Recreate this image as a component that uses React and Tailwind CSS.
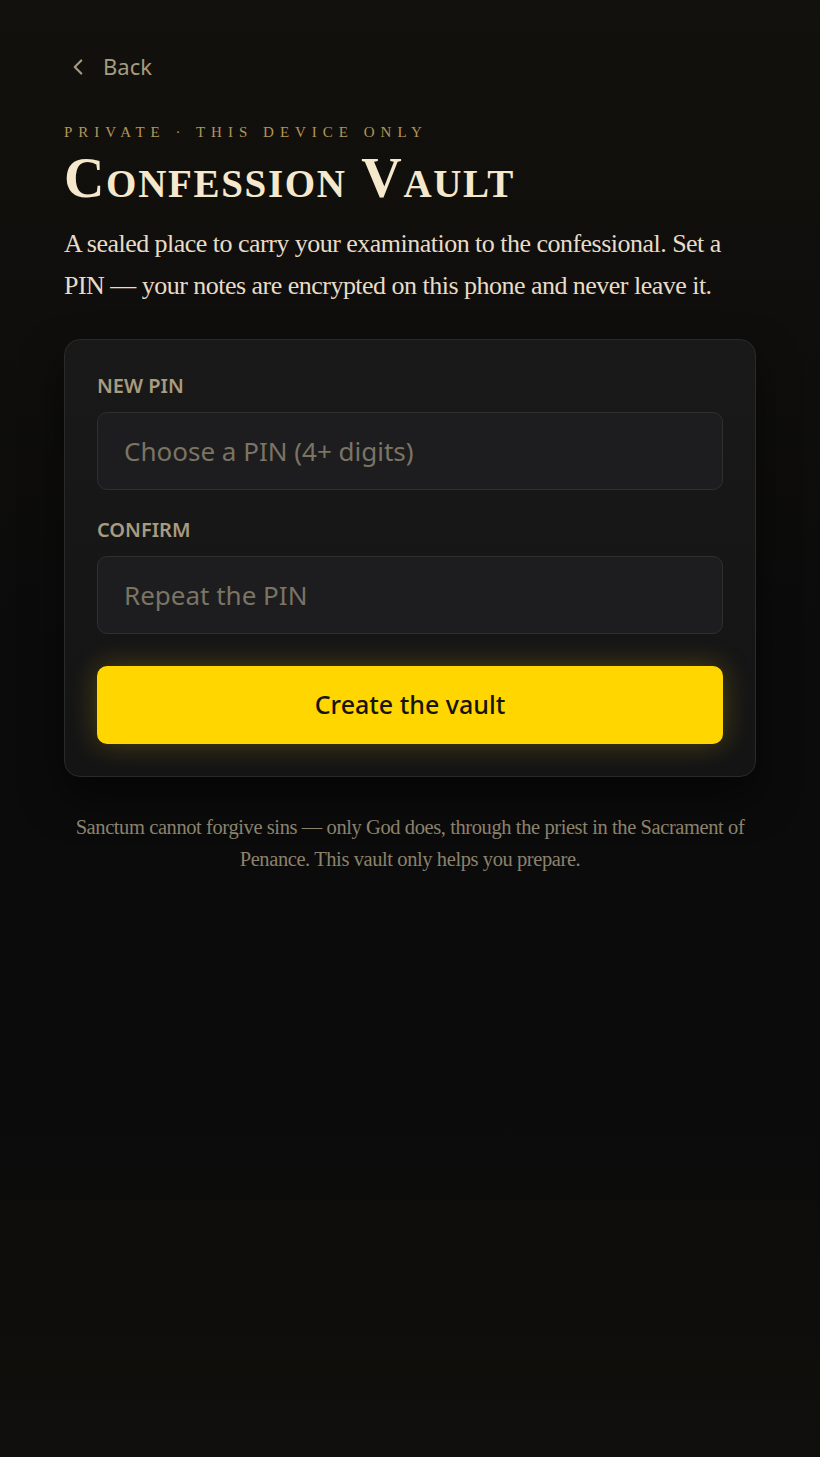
import { ChevronLeft } from 'lucide-react';

const sans = { fontFamily: '"Noto Sans", "Open Sans", sans-serif' };

export default function App() {
    return (
        <div className="min-h-[1457px] w-full bg-[linear-gradient(180deg,#13110d_0%,#0b0b0b_45%,#0b0b0b_75%,#110f0c_100%)] px-16 pt-[50px]" style={sans}>
            <button className="flex items-center gap-[12px] text-[22px] text-[#a69a80]">
                <ChevronLeft size={26} strokeWidth={2} className="ml-[1px]" />
                Back
            </button>

            <p className="mt-[38px] text-[15px] uppercase tracking-[0.4em] text-[#b39559] font-['Liberation_Serif',serif]">
                Private · This device only
            </p>
            <h1 className="mt-[3px] text-[56px] leading-[62px] font-bold text-[#f5e8cc] font-['Liberation_Serif',serif] [font-variant:small-caps] tracking-[0.03em]">
                Confession Vault
            </h1>
            <p className="mt-[14px] text-[26px] leading-[42px] text-[#e6dcc8] font-['Liberation_Serif',serif] tracking-[-0.02em]">
                A sealed place to carry your examination to the confessional. Set a PIN — your notes are encrypted on this phone and never leave it.
            </p>

            <div className="mt-[32px] rounded-2xl border border-[#2a2a2b] bg-[linear-gradient(180deg,#19191a,#141415)] p-8 shadow-[0_20px_40px_rgba(0,0,0,0.5)]">
                <label className="block text-[20px] font-semibold leading-[28px] text-[#a89b7e]">NEW PIN</label>
                <input
                    placeholder="Choose a PIN (4+ digits)"
                    className="mt-[12px] h-[78px] w-full rounded-[10px] border border-[#2f2f31] bg-[#1d1d1f] px-[26px] text-[26px] text-[#e6dcc8] placeholder:text-[#7b7464] outline-none"
                />
                <label className="mt-[26px] block text-[20px] font-semibold leading-[28px] text-[#a89b7e]">CONFIRM</label>
                <input
                    placeholder="Repeat the PIN"
                    className="mt-[12px] h-[78px] w-full rounded-[10px] border border-[#2f2f31] bg-[#1d1d1f] px-[26px] text-[26px] text-[#e6dcc8] placeholder:text-[#7b7464] outline-none"
                />
                <button className="mt-[32px] h-[78px] w-full rounded-[10px] bg-[#ffd600] text-[25px] font-medium text-[#16140f] shadow-[0_0_28px_rgba(255,214,0,0.25)]">
                    Create the vault
                </button>
            </div>

            <p className="mx-auto mt-[34px] max-w-[692px] text-center text-[20.5px] leading-[32px] text-[#8c826c] font-['Liberation_Serif',serif] tracking-[-0.02em]">
                Sanctum cannot forgive sins — only God does, through the priest in the Sacrament of Penance. This vault only helps you prepare.
            </p>
        </div>
    );
}
